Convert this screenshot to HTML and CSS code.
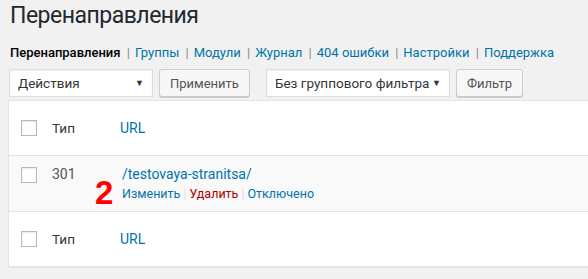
FILE: index.html
```html
<!DOCTYPE html>
<html>
  <head>
    <title>Перенаправления</title>
    <link rel="stylesheet" href="styles.css">
  </head>
  <body>
    <div class="wrap">
      <h1 class="page-title">Перенаправления</h1>

      <ul class="subsubsub">
        <li><a href="#" class="current">Перенаправления</a> |</li>
        <li><a href="#">Группы</a> |</li>
        <li><a href="#">Модули</a> |</li>
        <li><a href="#">Журнал</a> |</li>
        <li><a href="#">404 ошибки</a> |</li>
        <li><a href="#">Настройки</a> |</li>
        <li><a href="#">Поддержка</a></li>
      </ul>

      <div class="tablenav">
        <div class="fake-select actions">Действия<span class="arrow">&#9660;</span></div>
        <button class="btn">Применить</button>
        <div class="fake-select groups">Без группового фильтра<span class="arrow">&#9660;</span></div>
        <button class="btn">Фильтр</button>
      </div>

      <table class="list-table">
        <thead>
          <tr>
            <td class="check"><span class="box"></span></td>
            <th class="type">Тип</th>
            <th class="url"><a href="#">URL</a></th>
          </tr>
        </thead>
        <tbody>
          <tr class="alt">
            <td class="check"><span class="box"></span></td>
            <td class="type">301</td>
            <td class="url">
              <a href="#">/testovaya-stranitsa/</a>
              <div class="row-actions">
                <a href="#">Изменить</a><span class="sep">|</span><a href="#" class="delete">Удалить</a><span class="sep">|</span><a href="#">Отключено</a>
              </div>
              <span class="mark">2</span>
            </td>
          </tr>
        </tbody>
        <tfoot>
          <tr>
            <td class="check"><span class="box"></span></td>
            <th class="type">Тип</th>
            <th class="url"><a href="#">URL</a></th>
          </tr>
        </tfoot>
      </table>

      <div class="tablenav bottom">
        <div class="fake-select actions">Действия<span class="arrow">&#9660;</span></div>
        <button class="btn">Применить</button>
      </div>
    </div>
  </body>
</html>
```

FILE: styles.css
```css
body {
  margin: 0;
  background-color: #f1f1f1;
  color: #444;
  font-family: Roboto, "Noto Sans", sans-serif;
  font-size: 13px;
  overflow: hidden;
}

a {
  color: #0073aa;
  text-decoration: none;
}

.wrap {
  padding-left: 8px;
  width: 620px;
}

.page-title {
  margin: 0;
  padding: 0 0 0 2px;
  font-size: 23px;
  font-weight: 400;
  line-height: 32px;
  letter-spacing: -0.5px;
  color: #23282d;
}

.subsubsub {
  list-style: none;
  margin: 10px 0 0;
  padding: 0 0 0 2px;
  display: flex;
  line-height: 22px;
  color: #888;
  white-space: nowrap;
}

.subsubsub li {
  margin-right: 5px;
}

.subsubsub a {
  margin-right: 3px;
}

.subsubsub a.current {
  color: #000;
  font-weight: 500;
}

.tablenav {
  display: flex;
  align-items: center;
  margin-top: 5px;
  height: 28px;
}

.fake-select {
  box-sizing: border-box;
  height: 28px;
  background: #fff;
  border: 1px solid #ddd;
  box-shadow: inset 0 1px 2px rgba(0, 0, 0, 0.07);
  padding: 0 8px;
  line-height: 26px;
  font-size: 13.5px;
  color: #32373c;
  display: flex;
  justify-content: space-between;
  white-space: nowrap;
  margin-left: 1px;
}

.fake-select .arrow {
  font-size: 9px;
  color: #333;
}

.actions {
  width: 144px;
}

.groups {
  width: 184px;
  margin-left: 16px;
}

.btn {
  box-sizing: border-box;
  height: 28px;
  margin-left: 6px;
  padding: 0 10px;
  background: #f7f7f7;
  border: 1px solid #ccc;
  border-radius: 3px;
  box-shadow: 0 1px 0 #ccc;
  color: #555;
  font-family: Roboto, "Noto Sans", sans-serif;
  font-size: 13px;
}

.list-table {
  margin-top: 3px;
  width: 620px;
  border-collapse: collapse;
  background: #fff;
  border: 1px solid #e5e5e5;
  box-shadow: 0 1px 1px rgba(0, 0, 0, 0.04);
}

.list-table th,
.list-table td {
  text-align: left;
  font-weight: 400;
  vertical-align: top;
  padding: 0;
}

.list-table thead tr,
.list-table tfoot tr {
  height: 55px;
}

.list-table thead th,
.list-table tfoot th {
  vertical-align: middle;
  font-size: 13.5px;
  color: #32373c;
}

.list-table thead td,
.list-table tfoot td {
  vertical-align: middle;
}

.list-table thead tr {
  border-bottom: 1px solid #e1e1e1;
}

.list-table tfoot tr {
  border-top: 1px solid #e1e1e1;
}

.list-table .check {
  width: 31px;
  padding-left: 12px;
}

.list-table .type {
  width: 68px;
}

.list-table .url a {
  font-size: 14px;
}

.alt {
  background: #f9f9f9;
  height: 56px;
}

.alt td {
  padding-top: 10px;
}

.alt .type {
  color: #555;
  font-size: 14px;
}

.alt .url {
  position: relative;
  padding-left: 2px;
}

.box {
  display: block;
  box-sizing: border-box;
  width: 16px;
  height: 16px;
  border: 1px solid #b4b9be;
  background: #fff;
  box-shadow: inset 0 1px 2px rgba(0, 0, 0, 0.1);
}

.alt .check .box {
  margin-top: 1px;
}

.row-actions {
  margin-top: 2px;
  line-height: 20px;
  font-size: 12.5px;
}

.list-table .row-actions a {
  font-size: 12.5px;
}

.row-actions .sep {
  color: #ddd;
  margin: 0 3px;
}

.list-table .row-actions a.delete {
  color: #a00;
}

.mark {
  position: absolute;
  left: -25px;
  top: 20px;
  font-family: "Liberation Sans", Arial, sans-serif;
  font-weight: 700;
  font-size: 33px;
  line-height: 33px;
  color: #ff0000;
}

.bottom {
  margin-top: 12px;
}
```
